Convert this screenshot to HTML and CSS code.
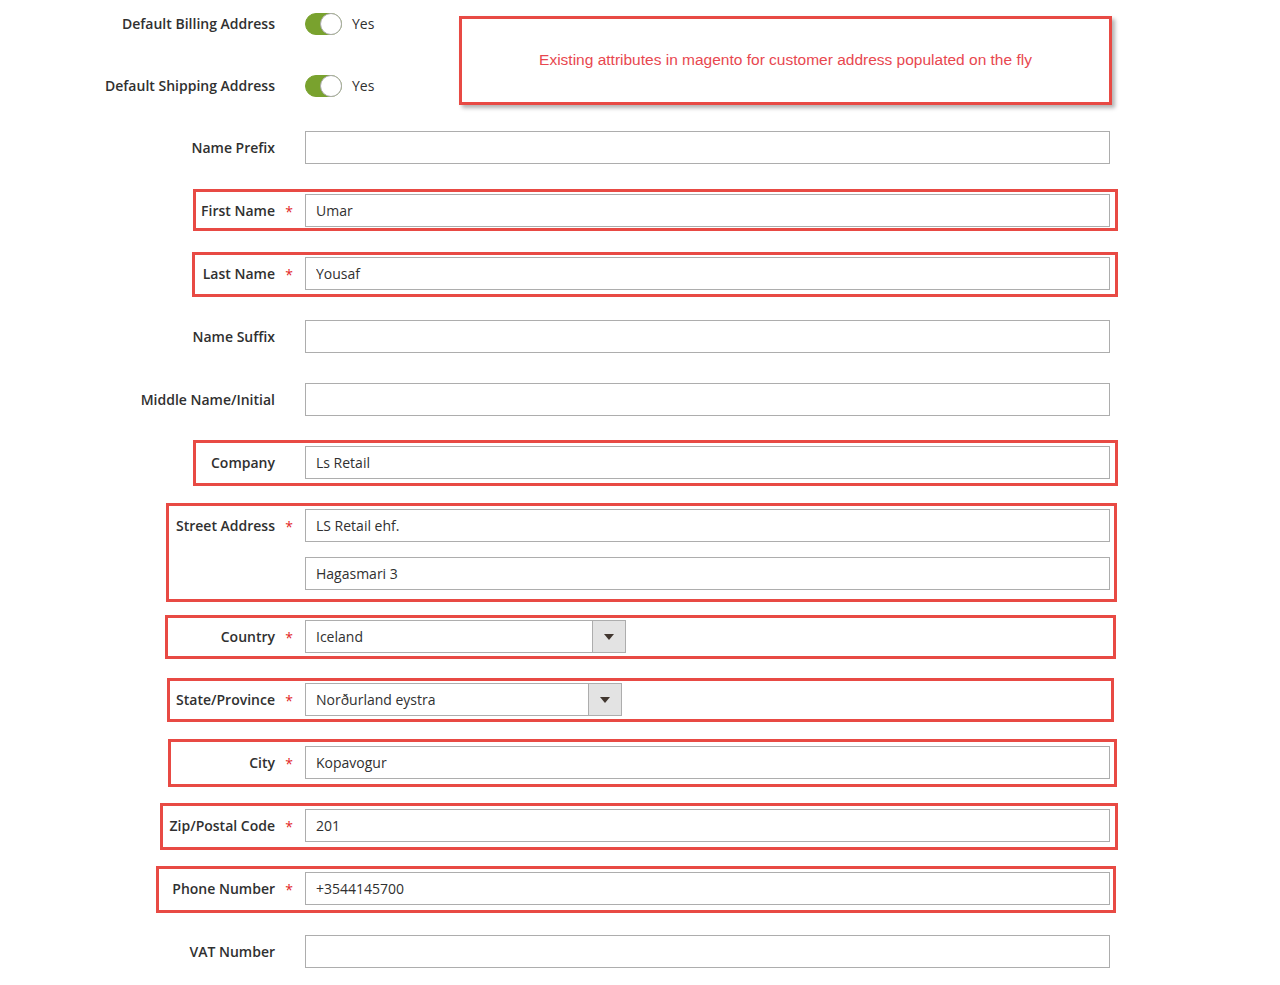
FILE: index.html
```html
<!DOCTYPE html>
<html lang="en">
<head>
    <meta charset="UTF-8">
    <meta name="viewport" content="width=device-width, initial-scale=1.0">
    <title>Customer Address</title>
    <link rel="stylesheet" href="styles.css">
</head>
<body>
    <div class="page">
        <form class="address-form">
            <div class="field field-toggle">
                <label>Default Billing Address</label>
                <span></span>
                <div class="control">
                    <span class="switch"><span class="knob"></span></span>
                    <span class="switch-text">Yes</span>
                </div>
            </div>
            <div class="field field-toggle">
                <label>Default Shipping Address</label>
                <span></span>
                <div class="control">
                    <span class="switch"><span class="knob"></span></span>
                    <span class="switch-text">Yes</span>
                </div>
            </div>

            <div class="field">
                <label for="prefix">Name Prefix</label>
                <span></span>
                <div class="control"><input type="text" id="prefix"></div>
            </div>
            <div class="field">
                <label for="firstname">First Name</label>
                <span class="required">*</span>
                <div class="control"><input type="text" id="firstname" value="Umar"></div>
            </div>
            <div class="field">
                <label for="lastname">Last Name</label>
                <span class="required">*</span>
                <div class="control"><input type="text" id="lastname" value="Yousaf"></div>
            </div>
            <div class="field">
                <label for="suffix">Name Suffix</label>
                <span></span>
                <div class="control"><input type="text" id="suffix"></div>
            </div>
            <div class="field">
                <label for="middlename">Middle Name/Initial</label>
                <span></span>
                <div class="control"><input type="text" id="middlename"></div>
            </div>
            <div class="field">
                <label for="company">Company</label>
                <span></span>
                <div class="control"><input type="text" id="company" value="Ls Retail"></div>
            </div>
            <div class="field">
                <label for="street1">Street Address</label>
                <span class="required">*</span>
                <div class="control control-multi">
                    <input type="text" id="street1" value="LS Retail ehf.">
                    <input type="text" id="street2" value="Hagasmari 3">
                </div>
            </div>
            <div class="field">
                <label for="country">Country</label>
                <span class="required">*</span>
                <div class="control">
                    <div class="select select-country">
                        <span class="select-value">Iceland</span>
                        <span class="select-btn"><span class="arrow"></span></span>
                    </div>
                </div>
            </div>
            <div class="field">
                <label for="region">State/Province</label>
                <span class="required">*</span>
                <div class="control">
                    <div class="select select-region">
                        <span class="select-value">Norðurland eystra</span>
                        <span class="select-btn"><span class="arrow"></span></span>
                    </div>
                </div>
            </div>
            <div class="field">
                <label for="city">City</label>
                <span class="required">*</span>
                <div class="control"><input type="text" id="city" value="Kopavogur"></div>
            </div>
            <div class="field">
                <label for="postcode">Zip/Postal Code</label>
                <span class="required">*</span>
                <div class="control"><input type="text" id="postcode" value="201"></div>
            </div>
            <div class="field">
                <label for="telephone">Phone Number</label>
                <span class="required">*</span>
                <div class="control"><input type="text" id="telephone" value="+3544145700"></div>
            </div>
            <div class="field">
                <label for="vat">VAT Number</label>
                <span></span>
                <div class="control"><input type="text" id="vat"></div>
            </div>
        </form>

        <!-- annotation overlays -->
        <div class="callout">Existing attributes in magento for customer address populated on the fly</div>
        <div class="mark mark-first"></div>
        <div class="mark mark-last"></div>
        <div class="mark mark-company"></div>
        <div class="mark mark-street"></div>
        <div class="mark mark-country"></div>
        <div class="mark mark-region"></div>
        <div class="mark mark-city"></div>
        <div class="mark mark-zip"></div>
        <div class="mark mark-phone"></div>
    </div>
</body>
</html>
```

FILE: styles.css
```css
* {
    margin: 0;
    padding: 0;
    box-sizing: border-box;
}
body {
    background-color: #fff;
    font-family: "Open Sans", sans-serif;
    color: #303030;
}
.page {
    position: relative;
    width: 1280px;
    height: 985px;
    overflow: hidden;
}
.address-form {
    padding-top: 8px;
}
.field {
    display: grid;
    grid-template-columns: 275px 30px 805px;
    align-items: start;
    margin-bottom: 30px;
}
.field label {
    text-align: right;
    font-size: 14px;
    font-weight: 600;
    line-height: 33px;
    color: #303030;
}
.field-toggle {
    margin-bottom: 30px;
}
.field-toggle + .field-toggle {
    margin-bottom: 29px;
}
.field-toggle label,
.field-toggle .control {
    line-height: 32px;
    height: 32px;
}
.required {
    height: 33px;
    text-align: center;
    color: #e22626;
    font-size: 14px;
    line-height: 36px;
    padding-right: 2px;
}
.control {
    display: flex;
    align-items: center;
}
.control-multi {
    flex-direction: column;
    gap: 15px;
}
input[type="text"] {
    width: 805px;
    height: 33px;
    border: 1px solid #adadad;
    padding: 0 10px;
    font-family: "Open Sans", sans-serif;
    font-size: 14px;
    color: #303030;
    background-color: #fff;
}
.switch {
    position: relative;
    display: inline-block;
    width: 37px;
    height: 22px;
    border-radius: 11px;
    background-color: #79a22e;
    border: 1px solid #79a22e;
}
.knob {
    position: absolute;
    right: -1px;
    top: -1px;
    width: 22px;
    height: 22px;
    border-radius: 50%;
    background-color: #fff;
    border: 1px solid #aaa;
}
.switch-text {
    margin-left: 10px;
    font-size: 14px;
}
.select {
    display: flex;
    height: 33px;
    border: 1px solid #adadad;
    font-size: 14px;
}
.select-country {
    width: 321px;
}
.select-region {
    width: 317px;
}
.select-value {
    flex: 1;
    padding: 0 10px;
    line-height: 31px;
}
.select-btn {
    width: 33px;
    border-left: 1px solid #adadad;
    background-color: #e3e3e3;
    display: flex;
    align-items: center;
    justify-content: center;
}
.arrow {
    width: 0;
    height: 0;
    border-left: 5px solid transparent;
    border-right: 5px solid transparent;
    border-top: 6px solid #41362f;
}
.callout {
    position: absolute;
    left: 459px;
    top: 16px;
    width: 653px;
    height: 89px;
    border: 3px solid #e84a44;
    background-color: #fff;
    box-shadow: 3px 3px 4px rgba(0, 0, 0, 0.3);
    color: #e8474f;
    font-family: "Liberation Sans", Arial, sans-serif;
    font-size: 15.5px;
    text-align: center;
    padding-top: 32px;
}
.mark {
    position: absolute;
    border: 3px solid #e84a44;
}
.mark-first { left: 193px; top: 189px; width: 925px; height: 42px; }
.mark-last { left: 192px; top: 252px; width: 926px; height: 45px; }
.mark-company { left: 193px; top: 440px; width: 925px; height: 46px; }
.mark-street { left: 166px; top: 503px; width: 951px; height: 99px; }
.mark-country { left: 165px; top: 615px; width: 951px; height: 44px; }
.mark-region { left: 167px; top: 678px; width: 947px; height: 44px; }
.mark-city { left: 168px; top: 739px; width: 949px; height: 48px; }
.mark-zip { left: 160px; top: 803px; width: 958px; height: 47px; }
.mark-phone { left: 156px; top: 866px; width: 960px; height: 47px; }
```
